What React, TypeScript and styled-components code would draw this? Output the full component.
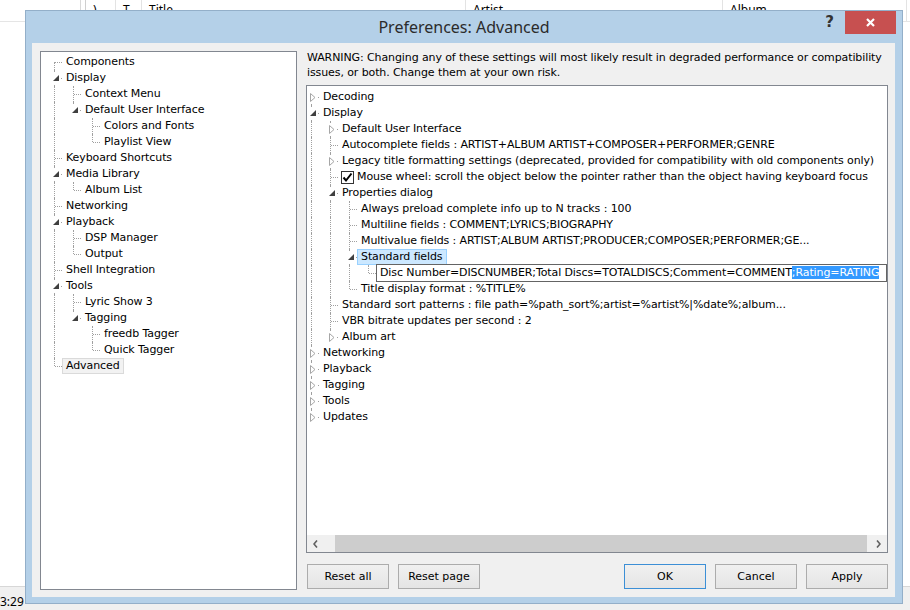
import React from "react";
import styled, { createGlobalStyle, css } from "styled-components";

const UI = `"DejaVu Sans", "Liberation Sans", sans-serif`;

const GlobalStyle = createGlobalStyle`
  html, body { margin: 0; padding: 0; width: 910px; height: 610px; overflow: hidden; background: #fff; }
  #root { height: 100%; }
`;

const Screen = styled.div`
  position: relative;
  width: 910px;
  height: 610px;
  display: flex;
  flex-direction: column;
  background: #fff;
  font-family: ${UI};
`;

const ListHeader = styled.div`
  display: flex;
  height: 21px;
  border-bottom: 1px solid #e5e5e5;
  font: 12px "Noto Sans", sans-serif;
  color: #000;
`;

const Pane = styled.div`
  width: 80px;
  border-right: 1px solid #d9d9d9;
`;

const Splitter = styled.div`
  width: 4px;
  border-right: 1px solid #cfcfcf;
`;

const HeaderCell = styled.div<{ $w: number }>`
  width: ${(p) => p.$w}px;
  flex: none;
  padding-left: 7px;
  box-sizing: border-box;
  line-height: 19px;
  border-right: 1px solid #e3e3e3;
  white-space: nowrap;
`;

const ListBody = styled.div`
  flex: 1;
  background: #fff;
`;

const StatusBar = styled.div`
  height: 24px;
  border-top: 1px solid #d7d7d7;
  background: #f0f0f0;
  box-sizing: border-box;
  padding-top: 8px;
  font: 12px "Noto Sans", sans-serif;
  line-height: 14px;
  color: #000;
`;

const Dialog = styled.div`
  position: absolute;
  left: 25px;
  top: 10px;
  width: 878px;
  height: 594px;
  box-sizing: border-box;
  border: 1px solid #93afc9;
  background: #b4d0e8;
  display: flex;
  flex-direction: column;
  padding: 0 7px 6px 6px;
`;

const TitleBar = styled.div`
  height: 32px;
  flex: none;
  display: grid;
  grid-template-columns: 1fr auto 1fr;
  margin: 0 -1px 0 0;
`;

const Title = styled.div`
  font: 16px "Noto Sans", sans-serif;
  color: #2b2b2b;
  line-height: 32px;
`;

const Caption = styled.div`
  display: flex;
  justify-content: flex-end;
  align-items: flex-start;
  gap: 11px;
`;

const Help = styled.div`
  font: bold 15px "DejaVu Sans", sans-serif;
  color: #333;
  line-height: 22px;
`;

const Close = styled.div`
  width: 51px;
  height: 23px;
  background: #c75050;
  display: flex;
  align-items: center;
  justify-content: center;
`;

const Content = styled.div`
  flex: 1;
  background: #f0f0f0;
  display: flex;
  gap: 9px;
  padding: 8px 7px 7px 8px;
  min-height: 0;
`;

const TreeFrame = styled.div<{ $w?: number }>`
  ${(p) =>
    p.$w
      ? css`
          width: ${p.$w}px;
          flex: none;
        `
      : css`
          flex: 1;
        `}
  box-sizing: border-box;
  border: 1px solid #828790;
  background: #fff;
  display: flex;
  flex-direction: column;
  overflow: hidden;
  min-height: 0;
`;

const TreeBody = styled.div<{ $pad: number; $top: number }>`
  flex: 1;
  overflow: hidden;
  padding: ${(p) => p.$top}px 0 0 ${(p) => p.$pad}px;
  font: 11px ${UI};
  letter-spacing: -0.1px;
  color: #000;
`;

const Row = styled.div`
  display: flex;
  height: 16px;
  white-space: nowrap;
`;

const Guide = styled.div<{ $line: boolean }>`
  width: 19px;
  flex: none;
  position: relative;
  ${(p) =>
    p.$line &&
    css`
      &::before {
        content: "";
        position: absolute;
        left: 4px;
        top: 0;
        bottom: 0;
        border-left: 1px dotted #a0a0a0;
      }
    `}
`;

const Connector = styled.div<{ $up: boolean; $down: boolean }>`
  width: 12px;
  flex: none;
  position: relative;
  &::before {
    content: "";
    position: absolute;
    left: 4px;
    top: ${(p) => (p.$up ? "0" : "8px")};
    bottom: ${(p) => (p.$down ? "0" : "8px")};
    border-left: 1px dotted #a0a0a0;
  }
  &::after {
    content: "";
    position: absolute;
    left: 5px;
    right: 0;
    top: 8px;
    border-top: 1px dotted #a0a0a0;
  }
`;

const Expander = styled.div`
  position: absolute;
  left: 1px;
  top: 2px;
  width: 9px;
  height: 12px;
  background: #fff;
  z-index: 1;
  display: flex;
  align-items: center;
  justify-content: center;
`;

const Label = styled.div<{ $sel?: "active" | "inactive" }>`
  flex: none;
  padding: 0 3px;
  border: 1px solid transparent;
  line-height: 14px;
  display: flex;
  align-items: center;
  gap: 3px;
  ${(p) =>
    p.$sel === "active" &&
    css`
      background: #cce8ff;
      border-color: #99d1ff;
    `}
  ${(p) =>
    p.$sel === "inactive" &&
    css`
      background: #f2f2f2;
      border-color: #dadada;
    `}
`;

const EditBox = styled.div`
  flex: 1;
  min-width: 0;
  height: 18px;
  margin: -1px 0;
  box-sizing: border-box;
  border: 1px solid #646464;
  background: #fff;
  padding: 0 3px;
  line-height: 16px;
  overflow: hidden;
  white-space: nowrap;
`;

const Selected = styled.span`
  background: #3399ff;
  color: #fff;
`;

const CheckBox = styled.span`
  width: 13px;
  height: 13px;
  box-sizing: border-box;
  border: 1px solid #333;
  background: #fff;
  display: inline-flex;
  align-items: center;
  justify-content: center;
  flex: none;
  margin-left: -1px;
`;

const Main = styled.div`
  flex: 1;
  min-width: 0;
  display: flex;
  flex-direction: column;
`;

const Warning = styled.div`
  font: 11px ${UI};
  letter-spacing: -0.1px;
  line-height: 15px;
  color: #000;
  margin: -1px 0 5px 1px;
`;

const HScroll = styled.div`
  height: 17px;
  flex: none;
  display: flex;
  background: #f0f0f0;
`;

const ScrollArrow = styled.div`
  width: 17px;
  flex: none;
  display: flex;
  align-items: center;
  justify-content: center;
`;

const Track = styled.div`
  flex: 1;
  display: flex;
  padding: 0 3px 0 11px;
`;

const Thumb = styled.div`
  flex: 1;
  background: #cdcdcd;
`;

const ButtonRow = styled.div`
  display: flex;
  gap: 9px;
  margin: 11px 0 1px 1px;
`;

const Spacer = styled.div`
  flex: 1;
`;

const Button = styled.div<{ $default?: boolean }>`
  width: 82px;
  height: 25px;
  box-sizing: border-box;
  border: 1px solid ${(p) => (p.$default ? "#3c8fd6" : "#acacac")};
  background: linear-gradient(#f0f0f0, #e5e5e5);
  display: flex;
  align-items: center;
  justify-content: center;
  font: 11px ${UI};
  color: #000;
`;

type TNode = {
  label: React.ReactNode;
  children?: TNode[];
  closed?: boolean;
  sel?: "active" | "inactive";
  kind?: "check" | "edit";
};

type FlatRow = {
  guides: boolean[];
  up: boolean;
  down: boolean;
  exp: "open" | "closed" | null;
  node: TNode;
};

function flatten(nodes: TNode[], guides: boolean[], root: boolean, out: FlatRow[]) {
  nodes.forEach((n, i) => {
    const last = i === nodes.length - 1;
    out.push({
      guides,
      up: !(root && i === 0),
      down: !last,
      exp: n.children ? "open" : n.closed ? "closed" : null,
      node: n,
    });
    if (n.children) flatten(n.children, [...guides, !last], false, out);
  });
  return out;
}

const OpenGlyph = () => (
  <svg width="6" height="6" viewBox="0 0 6 6">
    <path d="M6 0 L6 6 L0 6 Z" fill="#404040" />
  </svg>
);

const ClosedGlyph = () => (
  <svg width="6" height="9" viewBox="0 0 6 9">
    <path d="M0.5 0.5 L5 4.5 L0.5 8.5 Z" fill="#fff" stroke="#a6a6a6" strokeWidth="1" />
  </svg>
);

const CheckMark = () => (
  <svg width="11" height="11" viewBox="0 0 11 11">
    <path d="M1.5 5.5 L4 8.5 L9.5 1.5" fill="none" stroke="#000" strokeWidth="2" />
  </svg>
);

const Tree: React.FC<{ nodes: TNode[]; pad: number; top: number }> = ({ nodes, pad, top }) => {
  const rows = flatten(nodes, [], true, []);
  return (
    <TreeBody $pad={pad} $top={top}>
      {rows.map((r, i) => (
        <Row key={i}>
          {r.guides.map((g, j) => (
            <Guide key={j} $line={g} />
          ))}
          <Connector $up={r.up} $down={r.down}>
            {r.exp && <Expander>{r.exp === "open" ? <OpenGlyph /> : <ClosedGlyph />}</Expander>}
          </Connector>
          {r.node.kind === "edit" ? (
            <EditBox>{r.node.label}</EditBox>
          ) : (
            <Label $sel={r.node.sel}>
              {r.node.kind === "check" && (
                <CheckBox>
                  <CheckMark />
                </CheckBox>
              )}
              {r.node.label}
            </Label>
          )}
        </Row>
      ))}
    </TreeBody>
  );
};

const navTree: TNode[] = [
  { label: "Components" },
  {
    label: "Display",
    children: [
      { label: "Context Menu" },
      {
        label: "Default User Interface",
        children: [{ label: "Colors and Fonts" }, { label: "Playlist View" }],
      },
    ],
  },
  { label: "Keyboard Shortcuts" },
  { label: "Media Library", children: [{ label: "Album List" }] },
  { label: "Networking" },
  { label: "Playback", children: [{ label: "DSP Manager" }, { label: "Output" }] },
  { label: "Shell Integration" },
  {
    label: "Tools",
    children: [
      { label: "Lyric Show 3" },
      { label: "Tagging", children: [{ label: "freedb Tagger" }, { label: "Quick Tagger" }] },
    ],
  },
  { label: "Advanced", sel: "inactive" },
];

const advTree: TNode[] = [
  { label: "Decoding", closed: true },
  {
    label: "Display",
    children: [
      { label: "Default User Interface", closed: true },
      { label: "Autocomplete fields : ARTIST+ALBUM ARTIST+COMPOSER+PERFORMER;GENRE" },
      {
        label:
          "Legacy title formatting settings (deprecated, provided for compatibility with old components only)",
        closed: true,
      },
      {
        label: "Mouse wheel: scroll the object below the pointer rather than the object having keyboard focus",
        kind: "check",
      },
      {
        label: "Properties dialog",
        children: [
          { label: "Always preload complete info up to N tracks : 100" },
          { label: "Multiline fields : COMMENT;LYRICS;BIOGRAPHY" },
          { label: "Multivalue fields : ARTIST;ALBUM ARTIST;PRODUCER;COMPOSER;PERFORMER;GE..." },
          {
            label: "Standard fields",
            sel: "active",
            children: [
              {
                kind: "edit",
                label: (
                  <>
                    Disc Number=DISCNUMBER;Total Discs=TOTALDISCS;Comment=COMMENT
                    <Selected>;Rating=RATING</Selected>
                  </>
                ),
              },
            ],
          },
          { label: "Title display format : %TITLE%" },
        ],
      },
      { label: "Standard sort patterns : file path=%path_sort%;artist=%artist%|%date%;album..." },
      { label: "VBR bitrate updates per second : 2" },
      { label: "Album art", closed: true },
    ],
  },
  { label: "Networking", closed: true },
  { label: "Playback", closed: true },
  { label: "Tagging", closed: true },
  { label: "Tools", closed: true },
  { label: "Updates", closed: true },
];

const Chevron: React.FC<{ dir: "l" | "r" }> = ({ dir }) => (
  <svg width="5" height="8" viewBox="0 0 5 8">
    <path
      d={dir === "l" ? "M4 0.5 L1 4 L4 7.5" : "M1 0.5 L4 4 L1 7.5"}
      fill="none"
      stroke="#606060"
      strokeWidth="1.6"
    />
  </svg>
);

export default function App() {
  return (
    <Screen>
      <GlobalStyle />
      <ListHeader>
        <Pane />
        <Splitter />
        <HeaderCell $w={30}>)</HeaderCell>
        <HeaderCell $w={26}>T</HeaderCell>
        <HeaderCell $w={324}>Title</HeaderCell>
        <HeaderCell $w={257}>Artist</HeaderCell>
        <HeaderCell $w={184}>Album</HeaderCell>
      </ListHeader>
      <ListBody />
      <StatusBar>3:29</StatusBar>

      <Dialog>
        <TitleBar>
          <span />
          <Title>Preferences: Advanced</Title>
          <Caption>
            <Help>?</Help>
            <Close>
              <svg width="9" height="9" viewBox="0 0 9 9">
                <path d="M1 1 L8 8 M8 1 L1 8" stroke="#fff" strokeWidth="2.2" />
              </svg>
            </Close>
          </Caption>
        </TitleBar>
        <Content>
          <TreeFrame $w={257}>
            <Tree nodes={navTree} pad={9} top={2} />
          </TreeFrame>
          <Main>
            <Warning>
              WARNING: Changing any of these settings will most likely result in degraded performance or
              compatibility issues, or both. Change them at your own risk.
            </Warning>
            <TreeFrame>
              <Tree nodes={advTree} pad={0} top={3} />
              <HScroll>
                <ScrollArrow>
                  <Chevron dir="l" />
                </ScrollArrow>
                <Track>
                  <Thumb />
                </Track>
                <ScrollArrow>
                  <Chevron dir="r" />
                </ScrollArrow>
              </HScroll>
            </TreeFrame>
            <ButtonRow>
              <Button>Reset all</Button>
              <Button>Reset page</Button>
              <Spacer />
              <Button $default>OK</Button>
              <Button>Cancel</Button>
              <Button>Apply</Button>
            </ButtonRow>
          </Main>
        </Content>
      </Dialog>
    </Screen>
  );
}
